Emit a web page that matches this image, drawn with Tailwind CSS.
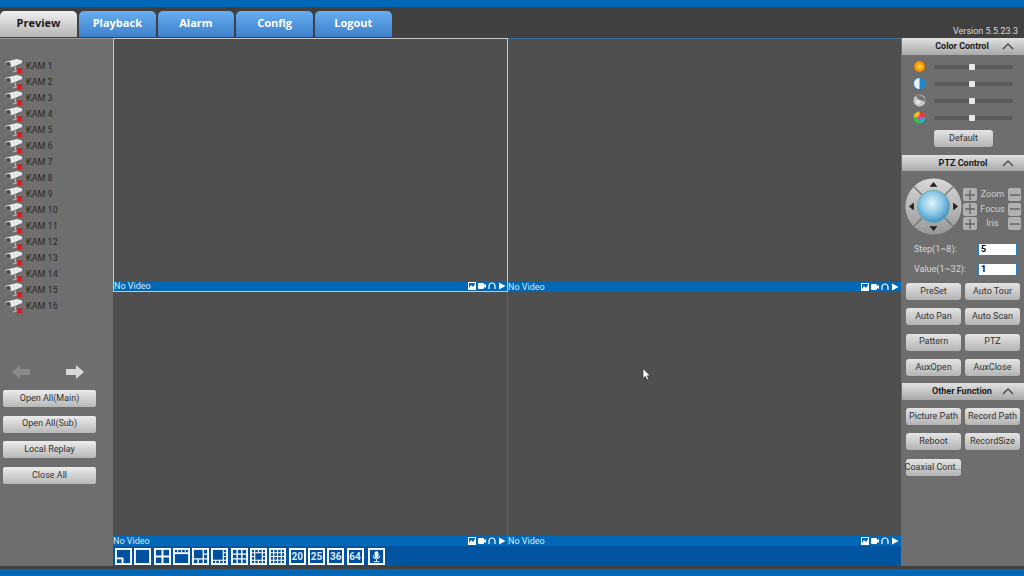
<!DOCTYPE html>
<html><head><meta charset="utf-8"><script src="https://cdn.jsdelivr.net/npm/@tailwindcss/browser@4"></script></head>
<body class="m-0 overflow-hidden">
<svg width="0" height="0" class="absolute">
<defs>
<radialGradient id="ball" cx="45%" cy="40%" r="60%"><stop offset="0" stop-color="#e4f4fb"/><stop offset=".55" stop-color="#8cc8e8"/><stop offset="1" stop-color="#3f8fc0"/></radialGradient>
<linearGradient id="ring" x1="0" y1="0" x2="0" y2="1"><stop offset="0" stop-color="#d8d8d8"/><stop offset="1" stop-color="#989898"/></linearGradient>
<radialGradient id="sun"><stop offset="0" stop-color="#ffd040"/><stop offset=".7" stop-color="#f59a10"/><stop offset="1" stop-color="#a86a20"/></radialGradient>
<symbol id="cam" viewBox="0 0 18 16">
<path d="M0 4 L12 1 L17 2.5 L17 5 L7 9 L2 8 Z" fill="#e8e8e8"/><path d="M0.5 4.5 L5 4 L6 8.5 L2 8 Z" fill="#4a4a58"/><path d="M10 8 L11 13 L8 14" stroke="#b8b8b8" stroke-width="1.2" fill="none"/><path d="M12.5 10.5 L17 15 M17 10.5 L12.5 15" stroke="#e8101a" stroke-width="2"/>
</symbol>
<symbol id="bi1" viewBox="0 0 8 8"><rect x=".5" y=".5" width="7" height="7" fill="none" stroke="#fff"/><path d="M1 6 L3 3 L5 5 L7 2 V7 H1Z" fill="#fff"/></symbol>
<symbol id="bi2" viewBox="0 0 8 8"><rect x="0" y="1" width="6" height="6" rx="1" fill="#fff"/><path d="M6 3 L8 2 V6 L6 5Z" fill="#fff"/></symbol>
<symbol id="bi3" viewBox="0 0 8 8"><path d="M1 7 V4 A3 3 0 0 1 7 4 V7" fill="none" stroke="#fff" stroke-width="1.2"/></symbol>
<symbol id="bi4" viewBox="0 0 8 8"><path d="M1 0.5 L7.5 4 L1 7.5Z" fill="#fff"/></symbol>
</defs>
</svg>
<div class="relative w-[1024px] h-[576px] flex flex-col overflow-hidden bg-[#404040] font-['Roboto',sans-serif]">
  <div class="h-[7px] bg-[#0068b7]"></div>
  <div class="h-[31px] flex items-end pb-[1px] gap-[2px] relative">
    <div class="w-[77px] h-[26px] pb-[2px] rounded-t-[5px] bg-linear-to-b from-[#f0f0f0] to-[#b4b4b4] flex items-center justify-center text-[11px] font-bold font-['Open_Sans',sans-serif] text-[#1a1a1a]">Preview</div>
    <div class="w-[76.67px] h-[26px] pb-[2px] rounded-t-[5px] bg-linear-to-b from-[#66aef0] to-[#3f80cc] flex items-center justify-center text-[11px] font-bold font-['Open_Sans',sans-serif] text-white">Playback</div>
    <div class="w-[76.67px] h-[26px] pb-[2px] rounded-t-[5px] bg-linear-to-b from-[#66aef0] to-[#3f80cc] flex items-center justify-center text-[11px] font-bold font-['Open_Sans',sans-serif] text-white">Alarm</div>
    <div class="w-[76.67px] h-[26px] pb-[2px] rounded-t-[5px] bg-linear-to-b from-[#66aef0] to-[#3f80cc] flex items-center justify-center text-[11px] font-bold font-['Open_Sans',sans-serif] text-white">Config</div>
    <div class="w-[76.67px] h-[26px] pb-[2px] rounded-t-[5px] bg-linear-to-b from-[#66aef0] to-[#3f80cc] flex items-center justify-center text-[11px] font-bold font-['Open_Sans',sans-serif] text-white">Logout</div>
    <div class="ml-auto mr-[6px] mb-[1px] text-[9px] leading-[10px] text-[#d8d8d8]">Version 5.5.23.3</div>
  </div>
  <div class="h-[528px] flex">
    <!-- left -->
    <div class="w-[113px] shrink-0 bg-[#6e6e6e] border-t border-[#9a9a9a] pt-[19px] flex flex-col">
      <div class="flex flex-col text-[9px] text-[#2a2a2a]">
        <div class="h-4 pl-[5px] flex items-center gap-[3px]"><svg class="w-[18px] h-4"><use href="#cam"/></svg><span class="pt-[1px]">KAM 1</span></div>
        <div class="h-4 pl-[5px] flex items-center gap-[3px]"><svg class="w-[18px] h-4"><use href="#cam"/></svg><span class="pt-[1px]">KAM 2</span></div>
        <div class="h-4 pl-[5px] flex items-center gap-[3px]"><svg class="w-[18px] h-4"><use href="#cam"/></svg><span class="pt-[1px]">KAM 3</span></div>
        <div class="h-4 pl-[5px] flex items-center gap-[3px]"><svg class="w-[18px] h-4"><use href="#cam"/></svg><span class="pt-[1px]">KAM 4</span></div>
        <div class="h-4 pl-[5px] flex items-center gap-[3px]"><svg class="w-[18px] h-4"><use href="#cam"/></svg><span class="pt-[1px]">KAM 5</span></div>
        <div class="h-4 pl-[5px] flex items-center gap-[3px]"><svg class="w-[18px] h-4"><use href="#cam"/></svg><span class="pt-[1px]">KAM 6</span></div>
        <div class="h-4 pl-[5px] flex items-center gap-[3px]"><svg class="w-[18px] h-4"><use href="#cam"/></svg><span class="pt-[1px]">KAM 7</span></div>
        <div class="h-4 pl-[5px] flex items-center gap-[3px]"><svg class="w-[18px] h-4"><use href="#cam"/></svg><span class="pt-[1px]">KAM 8</span></div>
        <div class="h-4 pl-[5px] flex items-center gap-[3px]"><svg class="w-[18px] h-4"><use href="#cam"/></svg><span class="pt-[1px]">KAM 9</span></div>
        <div class="h-4 pl-[5px] flex items-center gap-[3px]"><svg class="w-[18px] h-4"><use href="#cam"/></svg><span class="pt-[1px]">KAM 10</span></div>
        <div class="h-4 pl-[5px] flex items-center gap-[3px]"><svg class="w-[18px] h-4"><use href="#cam"/></svg><span class="pt-[1px]">KAM 11</span></div>
        <div class="h-4 pl-[5px] flex items-center gap-[3px]"><svg class="w-[18px] h-4"><use href="#cam"/></svg><span class="pt-[1px]">KAM 12</span></div>
        <div class="h-4 pl-[5px] flex items-center gap-[3px]"><svg class="w-[18px] h-4"><use href="#cam"/></svg><span class="pt-[1px]">KAM 13</span></div>
        <div class="h-4 pl-[5px] flex items-center gap-[3px]"><svg class="w-[18px] h-4"><use href="#cam"/></svg><span class="pt-[1px]">KAM 14</span></div>
        <div class="h-4 pl-[5px] flex items-center gap-[3px]"><svg class="w-[18px] h-4"><use href="#cam"/></svg><span class="pt-[1px]">KAM 15</span></div>
        <div class="h-4 pl-[5px] flex items-center gap-[3px]"><svg class="w-[18px] h-4"><use href="#cam"/></svg><span class="pt-[1px]">KAM 16</span></div>
      </div>
      <div class="mt-[49px] h-[18px] flex pl-[12px] gap-[36px]">
        <svg width="18" height="18" viewBox="0 0 18 18"><path d="M0 9 L8 2 V6 H18 V12 H8 V16Z" fill="#8a8a8a"/></svg>
        <svg width="18" height="18" viewBox="0 0 18 18"><path d="M18 9 L10 2 V6 H0 V12 H10 V16Z" fill="#d8d8d8"/></svg>
      </div>
      <div class="mt-[9px] pl-[3px] pr-[17px] flex flex-col gap-[8.6px]">
        <div class="h-[17px] rounded-[2px] bg-linear-to-b from-[#ececec] to-[#b8b8b8] flex items-center justify-center text-[9px] text-[#333]">Open All(Main)</div>
        <div class="h-[17px] rounded-[2px] bg-linear-to-b from-[#ececec] to-[#b8b8b8] flex items-center justify-center text-[9px] text-[#333]">Open All(Sub)</div>
        <div class="h-[17px] rounded-[2px] bg-linear-to-b from-[#ececec] to-[#b8b8b8] flex items-center justify-center text-[9px] text-[#333]">Local Replay</div>
        <div class="h-[17px] rounded-[2px] bg-linear-to-b from-[#ececec] to-[#b8b8b8] flex items-center justify-center text-[9px] text-[#333]">Close All</div>
      </div>
    </div>
    <!-- center -->
    <div class="w-[788px] shrink-0 flex flex-col relative">
      <div class="grid grid-cols-[395px_393px] grid-rows-[254px_254px] h-[508px]">
        <div class="flex flex-col border border-[#c8c8c8]">
          <div class="flex-1 bg-[#4f4f4f]"></div>
          <div class="h-[10px] bg-[#0068b7] flex items-center justify-between text-[9px] text-[#dfe8f0]"><span class="translate-y-[1px]">No Video</span><div class="flex gap-[2px] pr-[1px]"><svg class="w-2 h-2"><use href="#bi1"/></svg><svg class="w-2 h-2"><use href="#bi2"/></svg><svg class="w-2 h-2"><use href="#bi3"/></svg><svg class="w-2 h-2"><use href="#bi4"/></svg></div></div>
        </div>
        <div class="flex flex-col border-t border-[#3a6f9a]">
          <div class="flex-1 bg-[#4f4f4f]"></div>
          <div class="h-[10px] bg-[#0068b7] flex items-center justify-between text-[9px] text-[#dfe8f0]"><span class="translate-y-[1px]">No Video</span><div class="flex gap-[2px] pr-[2px]"><svg class="w-2 h-2"><use href="#bi1"/></svg><svg class="w-2 h-2"><use href="#bi2"/></svg><svg class="w-2 h-2"><use href="#bi3"/></svg><svg class="w-2 h-2"><use href="#bi4"/></svg></div></div>
        </div>
        <div class="flex flex-col border-r border-[#2f6f9f]">
          <div class="flex-1 bg-[#4f4f4f]"></div>
          <div class="h-[10px] bg-[#0068b7] flex items-center justify-between text-[9px] text-[#dfe8f0]"><span class="translate-y-[1px]">No Video</span><div class="flex gap-[2px] pr-[1px]"><svg class="w-2 h-2"><use href="#bi1"/></svg><svg class="w-2 h-2"><use href="#bi2"/></svg><svg class="w-2 h-2"><use href="#bi3"/></svg><svg class="w-2 h-2"><use href="#bi4"/></svg></div></div>
        </div>
        <div class="flex flex-col">
          <div class="flex-1 bg-[#4f4f4f]"></div>
          <div class="h-[10px] bg-[#0068b7] flex items-center justify-between text-[9px] text-[#dfe8f0]"><span class="translate-y-[1px]">No Video</span><div class="flex gap-[2px] pr-[2px]"><svg class="w-2 h-2"><use href="#bi1"/></svg><svg class="w-2 h-2"><use href="#bi2"/></svg><svg class="w-2 h-2"><use href="#bi3"/></svg><svg class="w-2 h-2"><use href="#bi4"/></svg></div></div>
        </div>
      </div>
      <div class="h-[20px] bg-[#0054a0] flex items-end pb-[1px] pl-[2px] gap-[2.3px]">
        <svg width="17" height="17" viewBox="0 0 18 18"><rect x="1" y="1" width="16" height="16" fill="#0050a0" stroke="#fff" stroke-width="2"/><path d="M1 11 H8 V17" fill="none" stroke="#fff" stroke-width="2"/></svg>
        <svg width="17" height="17" viewBox="0 0 18 18"><rect x="1" y="1" width="16" height="16" fill="#0050a0" stroke="#fff" stroke-width="2"/></svg>
        <svg width="17" height="17" viewBox="0 0 18 18"><rect x="1" y="1" width="16" height="16" fill="#0050a0" stroke="#fff" stroke-width="2"/><path d="M9 1 V17 M1 9 H17" stroke="#fff" stroke-width="2"/></svg>
        <svg width="17" height="17" viewBox="0 0 18 18"><rect x="1" y="1" width="16" height="16" fill="#0050a0" stroke="#fff" stroke-width="2"/><path d="M1 5.5 H17" stroke="#fff" stroke-width="2"/><path d="M5 1 V5 M9 1 V5 M13 1 V5" stroke="#fff"/></svg>
        <svg width="17" height="17" viewBox="0 0 18 18"><rect x="1" y="1" width="16" height="16" fill="#0050a0" stroke="#fff" stroke-width="2"/><path d="M1 11.5 H17 M12 1 V17 M12 6.5 H17 M6.5 11 V17" stroke="#fff" stroke-width="1.5"/></svg>
        <svg width="17" height="17" viewBox="0 0 18 18"><rect x="1" y="1" width="16" height="16" fill="#0050a0" stroke="#fff" stroke-width="2"/><path d="M1 13 H17 M13 1 V17 M13 5 H17 M13 9 H17 M5 13 V17 M9 13 V17" stroke="#fff" stroke-width="1.2"/></svg>
        <svg width="17" height="17" viewBox="0 0 18 18"><rect x="1" y="1" width="16" height="16" fill="#0050a0" stroke="#fff" stroke-width="2"/><path d="M6.5 1 V17 M11.5 1 V17 M1 6.5 H17 M1 11.5 H17" stroke="#fff" stroke-width="1.5"/></svg>
        <svg width="17" height="17" viewBox="0 0 18 18"><rect x="1" y="1" width="16" height="16" fill="#0050a0" stroke="#fff" stroke-width="2"/><path d="M5 1 V17 M13 1 V17 M1 5 H17 M1 13 H17 M9 1 V5 M9 13 V17 M1 9 H5 M13 9 H17" stroke="#fff" stroke-width="1.2"/></svg>
        <svg width="17" height="17" viewBox="0 0 18 18"><rect x="1" y="1" width="16" height="16" fill="#0050a0" stroke="#fff" stroke-width="2"/><path d="M5 1 V17 M9 1 V17 M13 1 V17 M1 5 H17 M1 9 H17 M1 13 H17" stroke="#fff" stroke-width="1.2"/></svg>
        <div class="w-[17px] h-[17px] border-2 border-white bg-[#0050a0] flex items-center justify-center text-[10px] font-bold text-[#dce8f4]">20</div>
        <div class="w-[17px] h-[17px] border-2 border-white bg-[#0050a0] flex items-center justify-center text-[10px] font-bold text-[#dce8f4]">25</div>
        <div class="w-[17px] h-[17px] border-2 border-white bg-[#0050a0] flex items-center justify-center text-[10px] font-bold text-[#dce8f4]">36</div>
        <div class="w-[17px] h-[17px] border-2 border-white bg-[#0050a0] flex items-center justify-center text-[10px] font-bold text-[#dce8f4]">64</div>
        <svg class="ml-[2px]" width="17" height="17" viewBox="0 0 18 18"><rect x="1" y="1" width="16" height="16" fill="#0050a0" stroke="#fff" stroke-width="2"/><rect x="7" y="3.5" width="4" height="7" rx="2" fill="#fff"/><path d="M5.5 8 A3.5 3.5 0 0 0 12.5 8 M9 12 V14 M6 14.5 H12" fill="none" stroke="#fff"/></svg>
      </div>
      <svg class="absolute left-[529px] top-[330px]" width="9" height="13" viewBox="0 0 9 13"><path d="M1 0.5 V10.5 L3.3 8.3 L5 12 L6.7 11.2 L5.2 7.8 H8.2Z" fill="#fff" stroke="#222" stroke-width=".6"/></svg>
    </div>
    <!-- right -->
    <div class="w-[123px] shrink-0 bg-[#6e6e6e] border-l border-[#2f7fc0] flex flex-col">
      <div class="h-[17px] bg-linear-to-b from-[#e2e2e2] to-[#a8a8a8] flex items-center justify-center relative text-[9px] font-bold text-[#1a1a1a]"><span class="pr-[2px]">Color Control</span><svg class="absolute right-[10px] top-[5px]" width="12" height="7" viewBox="0 0 12 7"><path d="M1 6 L6 1 L11 6" fill="none" stroke="#444" stroke-width="1.3"/></svg></div>
      <div class="pt-[3px] pl-[11px]">
        <div class="h-[17px] flex items-center gap-[8px]"><svg width="13" height="13" viewBox="0 0 13 13"><circle cx="6.5" cy="6.5" r="6" fill="url(#sun)"/></svg><div class="relative w-[79px] h-[4px] rounded-full bg-[#5a5a5a]"><div class="absolute left-[35px] top-[-1px] w-[6px] h-[6px] rounded-[1px] bg-[#e8e8e8]"></div></div></div>
        <div class="h-[17px] flex items-center gap-[8px]"><svg width="13" height="13" viewBox="0 0 13 13"><circle cx="6.5" cy="6.5" r="6" fill="#1d88d0"/><path d="M1 6.5 A5.5 5.5 0 0 1 6.5 1 V12 A5.5 5.5 0 0 1 1 6.5Z" fill="#f0f0f0"/></svg><div class="relative w-[79px] h-[4px] rounded-full bg-[#5a5a5a]"><div class="absolute left-[35px] top-[-1px] w-[6px] h-[6px] rounded-[1px] bg-[#e8e8e8]"></div></div></div>
        <div class="h-[17px] flex items-center gap-[8px]"><svg width="13" height="13" viewBox="0 0 13 13"><circle cx="6.5" cy="6.5" r="6" fill="#c8c8c8"/><path d="M3 2 A6 6 0 0 1 12 8 C9 5 6 8 3 2Z" fill="#707070"/><circle cx="5" cy="8" r="2" fill="#e8e8e8"/></svg><div class="relative w-[79px] h-[4px] rounded-full bg-[#5a5a5a]"><div class="absolute left-[35px] top-[-1px] w-[6px] h-[6px] rounded-[1px] bg-[#e8e8e8]"></div></div></div>
        <div class="h-[17px] flex items-center gap-[8px]"><svg width="13" height="13" viewBox="0 0 13 13"><path d="M6.5 6.5 V.5 A6 6 0 0 1 12.5 6.5Z" fill="#e83a3a"/><path d="M6.5 6.5 H12.5 A6 6 0 0 1 6.5 12.5Z" fill="#28b0c8"/><path d="M6.5 6.5 V12.5 A6 6 0 0 1 .5 6.5Z" fill="#36c040"/><path d="M6.5 6.5 H.5 A6 6 0 0 1 6.5 .5Z" fill="#e8c020"/><circle cx="6.5" cy="6.5" r="2" fill="#e040a0"/></svg><div class="relative w-[79px] h-[4px] rounded-full bg-[#5a5a5a]"><div class="absolute left-[35px] top-[-1px] w-[6px] h-[6px] rounded-[1px] bg-[#e8e8e8]"></div></div></div>
      </div>
      <div class="mt-[4px] ml-[32px] w-[59px] h-[17px] rounded-[3px] bg-linear-to-b from-[#e4e4e4] to-[#b4b4b4] flex items-center justify-center text-[9px] text-[#333]">Default</div>
      <div class="mt-[8px] h-[16px] pt-[1px] bg-linear-to-b from-[#e2e2e2] to-[#a8a8a8] flex items-center justify-center relative text-[9px] font-bold text-[#1a1a1a]"><span>PTZ Control</span><svg class="absolute right-[10px] top-[5px]" width="12" height="7" viewBox="0 0 12 7"><path d="M1 6 L6 1 L11 6" fill="none" stroke="#444" stroke-width="1.3"/></svg></div>
      <div class="mt-[7px] pl-[3px] flex h-[60px]">
        <svg width="57" height="57" viewBox="0 0 58 58"><circle cx="29" cy="29" r="28.5" fill="url(#ring)"/><path d="M9 9 L49 49 M49 9 L9 49" stroke="#777" stroke-width="1.5"/><circle cx="29" cy="29" r="16.5" fill="url(#ball)" stroke="#7aa" stroke-width="1"/><path d="M29 4 L33 9 H25Z M29 54 L33 49 H25Z M4 29 L9 25 V33Z M54 29 L49 25 V33Z" fill="#222"/></svg>
        <div class="ml-[1px] mt-[9px] w-[58px] flex flex-col text-[9px] text-[#cfcfcf]">
          <div class="h-[15px] flex items-center justify-between"><div class="w-[14px] h-[13px] rounded-[2px] bg-[#b0b0b0] flex items-center justify-center"><svg width="10" height="10" viewBox="0 0 10 10"><path d="M5 0 V10 M0 5 H10" stroke="#666" stroke-width="1.5"/></svg></div><span class="pt-[1px]">Zoom</span><div class="w-[13px] h-[13px] rounded-[2px] bg-[#b0b0b0] flex items-center justify-center"><svg width="10" height="10" viewBox="0 0 10 10"><path d="M0 5 H10" stroke="#666" stroke-width="1.5"/></svg></div></div>
          <div class="h-[14px] flex items-center justify-between"><div class="w-[14px] h-[13px] rounded-[2px] bg-[#b0b0b0] flex items-center justify-center"><svg width="10" height="10" viewBox="0 0 10 10"><path d="M5 0 V10 M0 5 H10" stroke="#666" stroke-width="1.5"/></svg></div><span class="pt-[1px]">Focus</span><div class="w-[13px] h-[13px] rounded-[2px] bg-[#b0b0b0] flex items-center justify-center"><svg width="10" height="10" viewBox="0 0 10 10"><path d="M0 5 H10" stroke="#666" stroke-width="1.5"/></svg></div></div>
          <div class="h-[15px] flex items-center justify-between"><div class="w-[14px] h-[13px] rounded-[2px] bg-[#b0b0b0] flex items-center justify-center"><svg width="10" height="10" viewBox="0 0 10 10"><path d="M5 0 V10 M0 5 H10" stroke="#666" stroke-width="1.5"/></svg></div><span class="pt-[1px]">Iris</span><div class="w-[13px] h-[13px] rounded-[2px] bg-[#b0b0b0] flex items-center justify-center"><svg width="10" height="10" viewBox="0 0 10 10"><path d="M0 5 H10" stroke="#666" stroke-width="1.5"/></svg></div></div>
        </div>
      </div>
      <div class="mt-[4px] h-[14px] pl-[12px] flex items-center text-[9px] text-[#d8d8d8]"><span class="w-[64px] translate-y-[1px]">Step(1~8):</span><div class="w-[39px] h-[13px] bg-white border border-[#2a7fc0] pl-[2px] text-[9px] leading-[11px] font-bold text-black">5</div></div>
      <div class="mt-[6px] h-[14px] pl-[12px] flex items-center text-[9px] text-[#d8d8d8]"><span class="w-[64px] translate-y-[1px]">Value(1~32):</span><div class="w-[39px] h-[13px] bg-white border border-[#2a7fc0] pl-[2px] text-[9px] leading-[11px] font-bold text-black">1</div></div>
      <div class="mt-[7px] pl-[4px] pr-[3px] grid grid-cols-[55px_55px] gap-x-[4px] gap-y-[8.3px] text-[9px] text-[#333]">
        <div class="h-[17px] rounded-[3px] bg-linear-to-b from-[#e4e4e4] to-[#b4b4b4] flex items-center justify-center">PreSet</div>
        <div class="h-[17px] rounded-[3px] bg-linear-to-b from-[#e4e4e4] to-[#b4b4b4] flex items-center justify-center">Auto Tour</div>
        <div class="h-[17px] rounded-[3px] bg-linear-to-b from-[#e4e4e4] to-[#b4b4b4] flex items-center justify-center">Auto Pan</div>
        <div class="h-[17px] rounded-[3px] bg-linear-to-b from-[#e4e4e4] to-[#b4b4b4] flex items-center justify-center">Auto Scan</div>
        <div class="h-[17px] rounded-[3px] bg-linear-to-b from-[#e4e4e4] to-[#b4b4b4] flex items-center justify-center">Pattern</div>
        <div class="h-[17px] rounded-[3px] bg-linear-to-b from-[#e4e4e4] to-[#b4b4b4] flex items-center justify-center">PTZ</div>
        <div class="h-[17px] rounded-[3px] bg-linear-to-b from-[#e4e4e4] to-[#b4b4b4] flex items-center justify-center">AuxOpen</div>
        <div class="h-[17px] rounded-[3px] bg-linear-to-b from-[#e4e4e4] to-[#b4b4b4] flex items-center justify-center">AuxClose</div>
      </div>
      <div class="mt-[7px] h-[17px] bg-linear-to-b from-[#e2e2e2] to-[#a8a8a8] flex items-center justify-center relative text-[9px] font-bold text-[#1a1a1a]"><span class="pr-[2px]">Other Function</span><svg class="absolute right-[10px] top-[5px]" width="12" height="7" viewBox="0 0 12 7"><path d="M1 6 L6 1 L11 6" fill="none" stroke="#444" stroke-width="1.3"/></svg></div>
      <div class="mt-[8px] pl-[4px] pr-[3px] grid grid-cols-[55px_55px] gap-x-[4px] gap-y-[8.5px] text-[9px] text-[#333]">
        <div class="h-[17px] rounded-[3px] bg-linear-to-b from-[#e4e4e4] to-[#b4b4b4] flex items-center justify-center">Picture Path</div>
        <div class="h-[17px] rounded-[3px] bg-linear-to-b from-[#e4e4e4] to-[#b4b4b4] flex items-center justify-center">Record Path</div>
        <div class="h-[17px] rounded-[3px] bg-linear-to-b from-[#e4e4e4] to-[#b4b4b4] flex items-center justify-center">Reboot</div>
        <div class="h-[17px] rounded-[3px] bg-linear-to-b from-[#e4e4e4] to-[#b4b4b4] flex items-center justify-center">RecordSize</div>
        <div class="h-[17px] rounded-[3px] bg-linear-to-b from-[#e4e4e4] to-[#b4b4b4] flex items-center justify-center whitespace-nowrap">Coaxial Cont...</div>
      </div>
    </div>
  </div>
  <div class="h-[3px] bg-[#404040]"></div>
  <div class="h-[7px] bg-[#0068b7]"></div>
</div>
</body></html>
